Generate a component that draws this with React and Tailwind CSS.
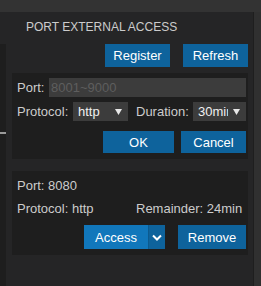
import React from 'react';

function Arrow() {
    return (
        <svg width="7" height="6" viewBox="0 0 7 6" className="shrink-0 ml-[5px]">
            <polygon points="0,0 7,0 3.5,6" fill="#e8e8e8" />
        </svg>
    );
}

function Select({ value, width }) {
    return (
        <div className={`flex items-center h-[19px] bg-[#3c3c3c] pl-[5px] pr-[6px] text-[#f0f0f0] ${width}`}>
            <span className="flex-1 min-w-0 overflow-hidden whitespace-nowrap">{value}</span>
            <Arrow />
        </div>
    );
}

function Btn({ children, className = '' }) {
    return (
        <button className={`flex items-center justify-center bg-[#0e639c] text-white ${className}`}>
            {children}
        </button>
    );
}

export default function App() {
    return (
        <div className="flex flex-col w-[261px] h-[286px] overflow-hidden bg-[#252526] font-['Liberation_Sans',Arial,sans-serif] text-[13px] leading-[19px] text-[#cccccc]">
            <div className="h-[12px] shrink-0 bg-[#333333]"></div>
            <div className="flex flex-1">
                <div className="w-[6px] flex flex-col">
                    <div className="h-[32px] bg-[#252526]"></div>
                    <div className="flex-1 bg-[#1e1e1e] pt-[88px]">
                        <div className="h-[2px] bg-[#9a9a9a]"></div>
                    </div>
                </div>

                <div className="flex-1 flex flex-col pl-[6px] pr-[5px]">
                    <div className="pt-[7px] pl-[14px] text-[12px] leading-[16px] text-[#cccccc]">PORT EXTERNAL ACCESS</div>

                    <div className="flex justify-end gap-[13px] mt-[9px]">
                        <Btn className="w-[65px] h-[23px]">Register</Btn>
                        <Btn className="w-[65px] h-[23px]">Refresh</Btn>
                    </div>

                    <div className="mt-[6px] bg-[#1e1e1e] pl-[5px] pr-[2px] pt-[5px] pb-[6px]">
                        <div className="flex items-center">
                            <span className="w-[32px]">Port:</span>
                            <div className="flex-1 h-[19px] bg-[#3c3c3c] pl-[2px] text-[#5e5e5e]">8001~9000</div>
                        </div>
                        <div className="flex items-center mt-[5px]">
                            <span className="w-[56px]">Protocol:</span>
                            <Select value="http" width="w-[55px]" />
                            <span className="ml-[8px] w-[57px]">Duration:</span>
                            <Select value="30min" width="w-[53px]" />
                        </div>
                        <div className="flex justify-end gap-[7px] mt-[10px]">
                            <Btn className="w-[71px] h-[22px]">OK</Btn>
                            <Btn className="w-[65px] h-[22px]">Cancel</Btn>
                        </div>
                    </div>

                    <div className="mt-[12px] bg-[#1e1e1e] pl-[5px] pr-[2px] pt-[5px] pb-[6px]">
                        <div>Port: 8080</div>
                        <div className="flex mt-[4px]">
                            <span className="w-[119px]">Protocol: http</span>
                            <span>Remainder: 24min</span>
                        </div>
                        <div className="flex justify-end items-center mt-[7px]">
                            <div className="flex h-[24px]">
                                <button className="w-[64px] bg-[#1177bb] text-white">Access</button>
                                <button className="w-[17px] flex items-center justify-center bg-[#0e639c] border-l border-[#0c5a8e]">
                                    <svg width="10" height="7" viewBox="0 0 10 7">
                                        <polyline points="1,1.5 5,5.5 9,1.5" fill="none" stroke="#ffffff" strokeWidth="2" />
                                    </svg>
                                </button>
                            </div>
                            <Btn className="w-[68px] h-[24px] ml-[13px]">Remove</Btn>
                        </div>
                    </div>
                </div>

                <div className="w-[8px] bg-[#303030] border-l border-[#1e1e1e]"></div>
            </div>
        </div>
    );
}
